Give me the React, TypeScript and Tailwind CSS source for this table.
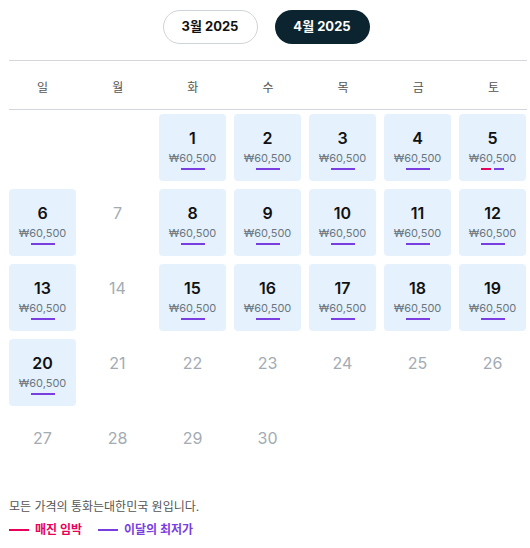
const WEEKDAYS = ['일', '월', '화', '수', '목', '금', '토']

interface Day {
  day: number
  price?: string
  soon?: boolean
}

const days: (Day | null)[] = [
  null,
  null,
  ...Array.from({ length: 30 }, (_, i) => {
    const d = i + 1
    const open = d <= 20 && d !== 7 && d !== 14
    return open ? { day: d, price: '₩60,500', soon: d === 5 } : { day: d }
  }),
]

function DayCell({ item }: { item: Day | null }) {
  if (!item) return <div className="h-[67px]" />
  if (!item.price) {
    return (
      <div className="h-[67px] flex justify-center pt-[12px]">
        <span className="text-[16px] text-[#a3abb3] leading-[24px]">{item.day}</span>
      </div>
    )
  }
  return (
    <div className="h-[67px] bg-[#e5f2fd] rounded-[4px] flex flex-col items-center pt-[12px]">
      <span className="text-[16px] font-semibold text-[#111] leading-[24px]">{item.day}</span>
      <span className="text-[11px] text-[#6b7680] leading-[14px] mt-[1px]">{item.price}</span>
      <div className="flex gap-[3px] mt-[3px]">
        {item.soon && <div className="w-[10px] h-[2px] bg-[#e8005a]" />}
        <div className={item.soon ? 'w-[10px] h-[2px] bg-[#7a3ee0]' : 'w-[24px] h-[2px] bg-[#7a3ee0]'} />
      </div>
    </div>
  )
}

export default function App() {
  return (
    <div className="w-[530px] h-[548px] bg-white font-['Inter','Noto_Sans_CJK_KR',sans-serif]">
      <div className="flex justify-center gap-[17px] pt-[10px] pl-[2px]">
        <button className="w-[95px] h-[34px] rounded-full border border-[#cfd4da] text-[13px] font-bold text-[#111]">
          3월 2025
        </button>
        <button className="w-[95px] h-[34px] rounded-full bg-[#0b2430] text-[13px] font-bold text-white">
          4월 2025
        </button>
      </div>

      <div className="ml-[9px] w-[518px] mt-[16px]">
        <div className="grid grid-cols-7 gap-2 border-t border-b border-[#d3d6da] h-[50px] items-center pt-[6px]">
          {WEEKDAYS.map((w) => (
            <span key={w} className="text-center text-[12px] text-[#555]">{w}</span>
          ))}
        </div>
        <div className="grid grid-cols-7 gap-2 mt-[4px] w-[517px]">
          {days.map((d, i) => (
            <DayCell key={i} item={d} />
          ))}
        </div>

        <p className="mt-[17px] text-[12px] text-[#555] leading-[18px]">모든 가격의 통화는대한민국 원입니다.</p>
        <div className="flex items-center gap-[16px] mt-[5px] text-[12px] font-bold leading-[18px]">
          <div className="flex items-center gap-[6px]">
            <div className="w-[20px] h-[2px] bg-[#e8005a]" />
            <span className="text-[#e8005a]">매진 임박</span>
          </div>
          <div className="flex items-center gap-[6px]">
            <div className="w-[20px] h-[2px] bg-[#7a3ee0]" />
            <span className="text-[#7a3ee0]">이달의 최저가</span>
          </div>
        </div>
      </div>
    </div>
  )
}
